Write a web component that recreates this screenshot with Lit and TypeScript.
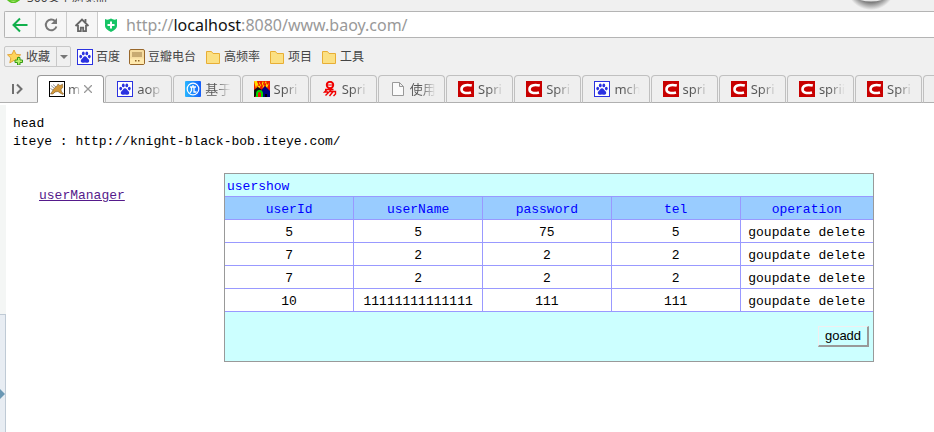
import { LitElement, html, css, svg } from "lit";
import { customElement } from "lit/decorators.js";

const paw = svg`<rect x=".5" y=".5" width="15" height="15" fill="#fff" stroke="#2b32e0"/>
  <g fill="#2b32e0"><ellipse cx="3.700" cy="7.600" rx="1.400" ry="1.800"/><ellipse cx="6.300" cy="4.400" rx="1.400" ry="1.900"/><ellipse cx="9.800" cy="4.400" rx="1.400" ry="1.900"/><ellipse cx="12.300" cy="7.600" rx="1.400" ry="1.800"/><path d="M8 7.200c1.600 0 2 1.600 3 2.500 1.200 1 1.600 2.200.9 3.300-.9 1.200-2.400.4-3.900.4s-3 .8-3.900-.4c-.7-1.100-.3-2.300.9-3.300 1-.9 1.400-2.500 3-2.500z"/></g>`;
const folder = svg`<path d="M1.500 2.500h5l1.500 2h6.500v10h-13z" fill="#fbe083" stroke="#e8ae35"/>`;
const csdn = svg`<rect width="16" height="16" fill="#c80000"/><path d="M13.800 4.600C8 3 3.500 4.500 3.500 8.200c0 3.700 4.500 4.600 9.500 3.200" fill="none" stroke="#fff" stroke-width="2.600"/>`;

const icons: Record<string, unknown> = {
  paw, folder, csdn,
  cat: svg`<rect x=".5" y=".5" width="15" height="15" fill="#fff" stroke="#000"/><path d="M2 12.500l4-1.500M2 4.500l3 2.500M4 3.500l3 2.500M1.500 7.500L4 9" stroke="#8b8b8b" stroke-width=".9"/><path d="M8 5l1-2 1.500 1.200h1.300L13.500 3l.3 3.500-1.800 1.700.5 2.800 2 1.500-.5 1-3-1.500-2-1.500-3 .5-2 2-2.500 0 1-1.500L5 7.500z" fill="#d2983a" stroke="#6b4a20" stroke-width=".5"/>`,
  blue: svg`<defs><linearGradient id="g" x1="0" x2="1"><stop stop-color="#27b5ff"/><stop offset="1" stop-color="#155dfa"/></linearGradient></defs><rect width="16" height="16" rx="1" fill="url(#g)"/><circle cx="8" cy="8" r="5.800" fill="none" stroke="#fff" stroke-width="1.200"/><path d="M5 6h6M8 4v2M6.500 6.500v3l-1.500 2.500M9 6.500v4.500h2.500" fill="none" stroke="#fff" stroke-width="1.300"/>`,
  fire: svg`<rect width="16" height="16" fill="#f01800"/><path d="M0 0h3l1 3 2-2 1 3 2-4 1 3 2-3 1 4 2-2-2 5-2-3-2 3-2-3-2 4-2-4-1 4z" fill="#ffdf00"/><path d="M4 0l1 5 2-4 1 5 2-4 1 3 1-3" fill="none" stroke="#f01800"/><path d="M7.500 9L11 5l5 5v6H9z" fill="#000080"/><path d="M0 9l4-3 4 3-4 2-3 5H0z" fill="#111"/><path d="M3 16v-3c0-4 5-4 5 0v3" fill="none" stroke="#00dc00" stroke-width="2"/><path d="M11 16v-3h2v3" fill="#000"/>`,
  yi: svg`<g fill="none" stroke="#f00000"><circle cx="8" cy="4" r="3.200" stroke-width="2"/><path d="M6 4h4" stroke-width="1"/><path d="M3 8.500h8.500M5 8.500L2.500 11H6M9 9l-5.500 5.500M11.500 10L7.500 15M8 10.500h5.500v2.500l-2 2" stroke-width="1.400"/></g>`,
  page: svg`<path d="M2.500 1.500h7l4 4v9h-11zM9.500 1.500v4h4" fill="#fafafa" stroke="#999"/>`,
  radio: svg`<rect x=".5" y=".5" width="15" height="15" rx="1.500" fill="#f5dca0" stroke="#98672b"/><rect x="3" y="3" width="10" height="5" fill="#c8ab72"/><path d="M1 9.500h14V15H1z" fill="#ffe9ad"/><path d="M6 11h1.500v1.500H6zM9 11h1.500v1.500H9z" fill="#8c6428"/>`,
  star: svg`<path d="M7 1l2 4.300 4.700.5-3.500 3.200 1 4.800L7 11.400l-4.200 2.400 1-4.800L.5 5.800 5 5.300z" fill="#ffd45a" stroke="#e3a63c"/><path d="M10.500 8.500h2.500v2.500h2.500v2.500H13V16h-2.500v-2.500H8V11h2.500z" fill="#b9f06a" stroke="#369b18"/>`,
  back: svg`<path d="M15.500 8H2M8 1.500L1.500 8 8 14.500" fill="none" stroke="#12b04c" stroke-width="2"/>`,
  reload: svg`<path d="M12.200 4.200A5.400 5.400 0 1 0 13.400 9.500" fill="none" stroke="#777" stroke-width="2"/><path d="M14 1v6H8z" fill="#777"/>`,
  home: svg`<path d="M1.500 9L8 2.500 14.500 9M4 8v6.200h2.800v-3.500h2.400v3.500H12V8M11.500 2v4" fill="none" stroke="#666" stroke-width="1.800"/>`,
  shield: svg`<path d="M2 2q3 1.500 6-.5 3 2 6 .5v7q0 3-6 6-6-3-6-6z" fill="#16c465"/><path d="M8 4.500v7M4.500 8h7" stroke="#fff" stroke-width="2"/>`,
  side: svg`<path d="M3 3v10M7 3.500L11.500 8 7 12.500" fill="none" stroke="#707070" stroke-width="2"/>`,
};
const icon = (name: string) => html`<svg class="icon" viewBox="0 0 16 16" aria-hidden="true">${icons[name]}</svg>`;

const bookmarks = [["paw", "百度"], ["radio", "豆瓣电台"], ["folder", "高频率"], ["folder", "项目"], ["folder", "工具"]];
const tabs = [["cat", "m"], ["paw", "aop"], ["blue", "基于"], ["fire", "Spri"], ["yi", "Spri"], ["page", "使用"], ["csdn", "Spri"], ["csdn", "Spri"], ["paw", "mch"], ["csdn", "spri"], ["csdn", "Spri"], ["csdn", "sprii"], ["csdn", "Spri"], ["", ""]];
const columns = ["userId", "userName", "password", "tel", "operation"];
const users = [["5", "5", "75", "5"], ["7", "2", "2", "2"], ["7", "2", "2", "2"], ["10", "11111111111111", "111", "111"]];

@customElement("app-root")
export class AppRoot extends LitElement {
  static styles = css`
    :host { display: flex; flex-direction: column; min-height: 100vh; overflow: hidden; background: #fff; color: #000; font-family: "Liberation Mono", "Noto Sans CJK SC", monospace; font-size: 13px; line-height: 18px; }
    * { box-sizing: border-box; }
    button { font: inherit; color: inherit; margin: 0; padding: 0; border: 0; background: none; border-radius: 0; }
    .icon { width: 16px; height: 16px; flex: none; display: block; }
    .chrome { background: #f0f0f0; color: #444; font-family: "Noto Sans", "Noto Sans CJK SC", sans-serif; font-size: 12px; position: relative; }
    .title { height: 11px; padding-left: 7px; display: flex; gap: 7px; }
    .logo { width: 13px; height: 3px; }
    .name { display: flex; align-items: flex-end; height: 2px; overflow: hidden; line-height: 8px; white-space: nowrap; }
    .orb { position: absolute; right: 35px; top: 0; width: 56px; height: 11px; }
    .address { display: flex; align-items: center; height: 27px; margin-left: 4px; background: #fff; border: 1px solid #b4b4b4; border-right: 0; border-radius: 2px 0 0 2px; }
    .nav { width: 31px; height: 25px; display: grid; place-items: center; background: #f6f6f6; border-right: 1px solid #ccc; }
    .site { margin: 0 7px 0 5px; display: flex; }
    .url { flex: 1; font-size: 16px; line-height: 24px; color: #999; white-space: nowrap; }
    .url b { font-weight: normal; color: #111; }
    .bookmarks { display: flex; align-items: center; gap: 9px; height: 37px; padding: 0 4px; }
    .fav { display: flex; height: 21px; border: 1px solid #c8c8c8; border-radius: 2px; margin-right: -3px; }
    .favmain { display: flex; align-items: center; gap: 3px; padding: 0 6px 0 2px; }
    .drop { width: 14px; border-left: 1px solid #c8c8c8; display: grid; place-items: center; }
    .drop svg { width: 8px; height: 4px; }
    .mark { display: flex; align-items: center; gap: 3px; color: #444; text-decoration: none; }
    .tabbar { display: flex; height: 28px; padding-left: 37px; position: relative; border-bottom: 1px solid #b0b0b0; }
    .side { position: absolute; left: 10px; top: 6px; }
    .tabs { display: grid; grid-template-columns: repeat(14, calc((100% + 37px) / 13.7)); width: 100%; margin-bottom: -1px; }
    .tab { display: flex; align-items: center; gap: 4px; margin-right: 1px; padding: 0 0 1px 11px; border: 1px solid #c0c0c0; border-bottom-color: #b0b0b0; border-radius: 4px 4px 0 0; color: #666; font-size: 13px; background: #efefef; white-space: nowrap; overflow: hidden; }
    .tab.active { background: #fff; border-color: #999; border-bottom-color: #fff; }
    .label { width: 26px; overflow: hidden; text-align: left; background: linear-gradient(90deg, #555 40%, #efefef); background-clip: text; color: transparent; }
    .active { gap: 3px; }
    .active .label { width: 13px; }
    .close { width: 8px; height: 8px; }
    .body { flex: 1; display: grid; grid-template-columns: 6px 1fr; padding-top: 2px; }
    .rail { background: #f4f6f5; display: flex; flex-direction: column; padding-top: 209px; }
    .handle { flex: 1; border: solid #bfcad5; border-width: 1px 1px 0 0; background: #e8edf3; padding-top: 74px; }
    .handle svg { width: 5px; height: 10px; display: block; }
    .content { padding: 10px 60px 60px 7px; }
    .content p { margin: 0; }
    .main { display: grid; grid-template-columns: 185px 1fr; padding: 22px 0 0 26px; }
    .menu { margin-top: 14px; justify-self: start; align-self: start; color: #551a8b; }
    .panel { border: 1px solid #999; background: #cff; }
    .caption { color: #00f; height: 22px; padding: 4px 2px 0; }
    table { width: 100%; border-collapse: collapse; table-layout: fixed; background: #fff; }
    th, td { border: 1px solid #99f; height: 23px; padding: 4px 0 0; text-align: center; font-weight: normal; white-space: nowrap; }
    th { background: #9cf; color: #00f; }
    th:first-child, td:first-child { border-left: 0; }
    th:last-child, td:last-child { border-right: 0; }
    .last { width: 133px; }
    .foot { display: flex; justify-content: flex-end; padding: 14px 4px; }
    .add { width: 51px; height: 21px; border: solid; border-color: #f2eef0 #999 #999 #f2eef0; border-width: 1px 2px 2px 1px; background: #cff; font-family: "Liberation Sans", sans-serif; font-size: 13px; line-height: 18px; }
  `;

  render() {
    return html`
      <header class="chrome">
        <div class="title">
          <svg class="logo" viewBox="0 0 13 3"><path d="M1 0q5 5 11 0z" fill="#c3f08c" stroke="#58c422" stroke-width="1.500"/></svg>
          <span class="name">360安全浏览器</span>
        </div>
        <svg class="orb" viewBox="0 0 56 11"><defs><radialGradient id="s" gradientUnits="userSpaceOnUse" cx="28" cy="-15" r="25"><stop offset=".64" stop-color="#666"/><stop offset="1" stop-color="#f0f0f0"/></radialGradient></defs><path d="M0 0h56v11H0z" fill="url(#s)"/><path d="M17 0q11 3 22 0z" fill="#e4e4e4"/></svg>
        <div class="address">
          <button class="nav" aria-label="Back">${icon("back")}</button>
          <button class="nav" aria-label="Reload">${icon("reload")}</button>
          <button class="nav" aria-label="Home">${icon("home")}</button>
          <span class="site">${icon("shield")}</span>
          <span class="url">http://<b>localhost</b>:8080/www.baoy.com/</span>
        </div>
        <nav class="bookmarks">
          <div class="fav">
            <button class="favmain">${icon("star")}收藏</button>
            <button class="drop" aria-label="More"><svg viewBox="0 0 8 4"><path d="M0 0h8L4 4z" fill="#777"/></svg></button>
          </div>
          ${bookmarks.map(([i, t]) => html`<a class="mark" href="#">${icon(i)}${t}</a>`)}
        </nav>
        <div class="tabbar">
          <button class="side" aria-label="Tab list">${icon("side")}</button>
          <div class="tabs">
            ${tabs.map(([i, t], n) => html`<button class="tab ${n ? "" : "active"}" aria-label=${t || "Tab"}>
              ${i ? icon(i) : ""}<span class="label">${t}</span>
              ${n ? "" : html`<svg class="close" viewBox="0 0 8 8"><path d="M0 0l8 8M8 0L0 8" stroke="#999" stroke-width="1.300"/></svg>`}
            </button>`)}
          </div>
        </div>
      </header>
      <div class="body">
        <div class="rail"><div class="handle"><svg viewBox="0 0 5 10"><path d="M0 0l5 5-5 5z" fill="#6a98b4"/></svg></div></div>
        <main class="content">
          <p>head</p>
          <p>iteye : http://knight-black-bob.iteye.com/</p>
          <div class="main">
            <a class="menu" href="#">userManager</a>
            <section class="panel">
              <div class="caption">usershow</div>
              <table>
                <thead><tr>${columns.map((c, n) => html`<th class=${n === 4 ? "last" : ""}>${c}</th>`)}</tr></thead>
                <tbody>${users.map((u) => html`<tr>${u.map((v) => html`<td>${v}</td>`)}<td>goupdate delete</td></tr>`)}</tbody>
              </table>
              <div class="foot"><button class="add">goadd</button></div>
            </section>
          </div>
        </main>
      </div>
    `;
  }
}
